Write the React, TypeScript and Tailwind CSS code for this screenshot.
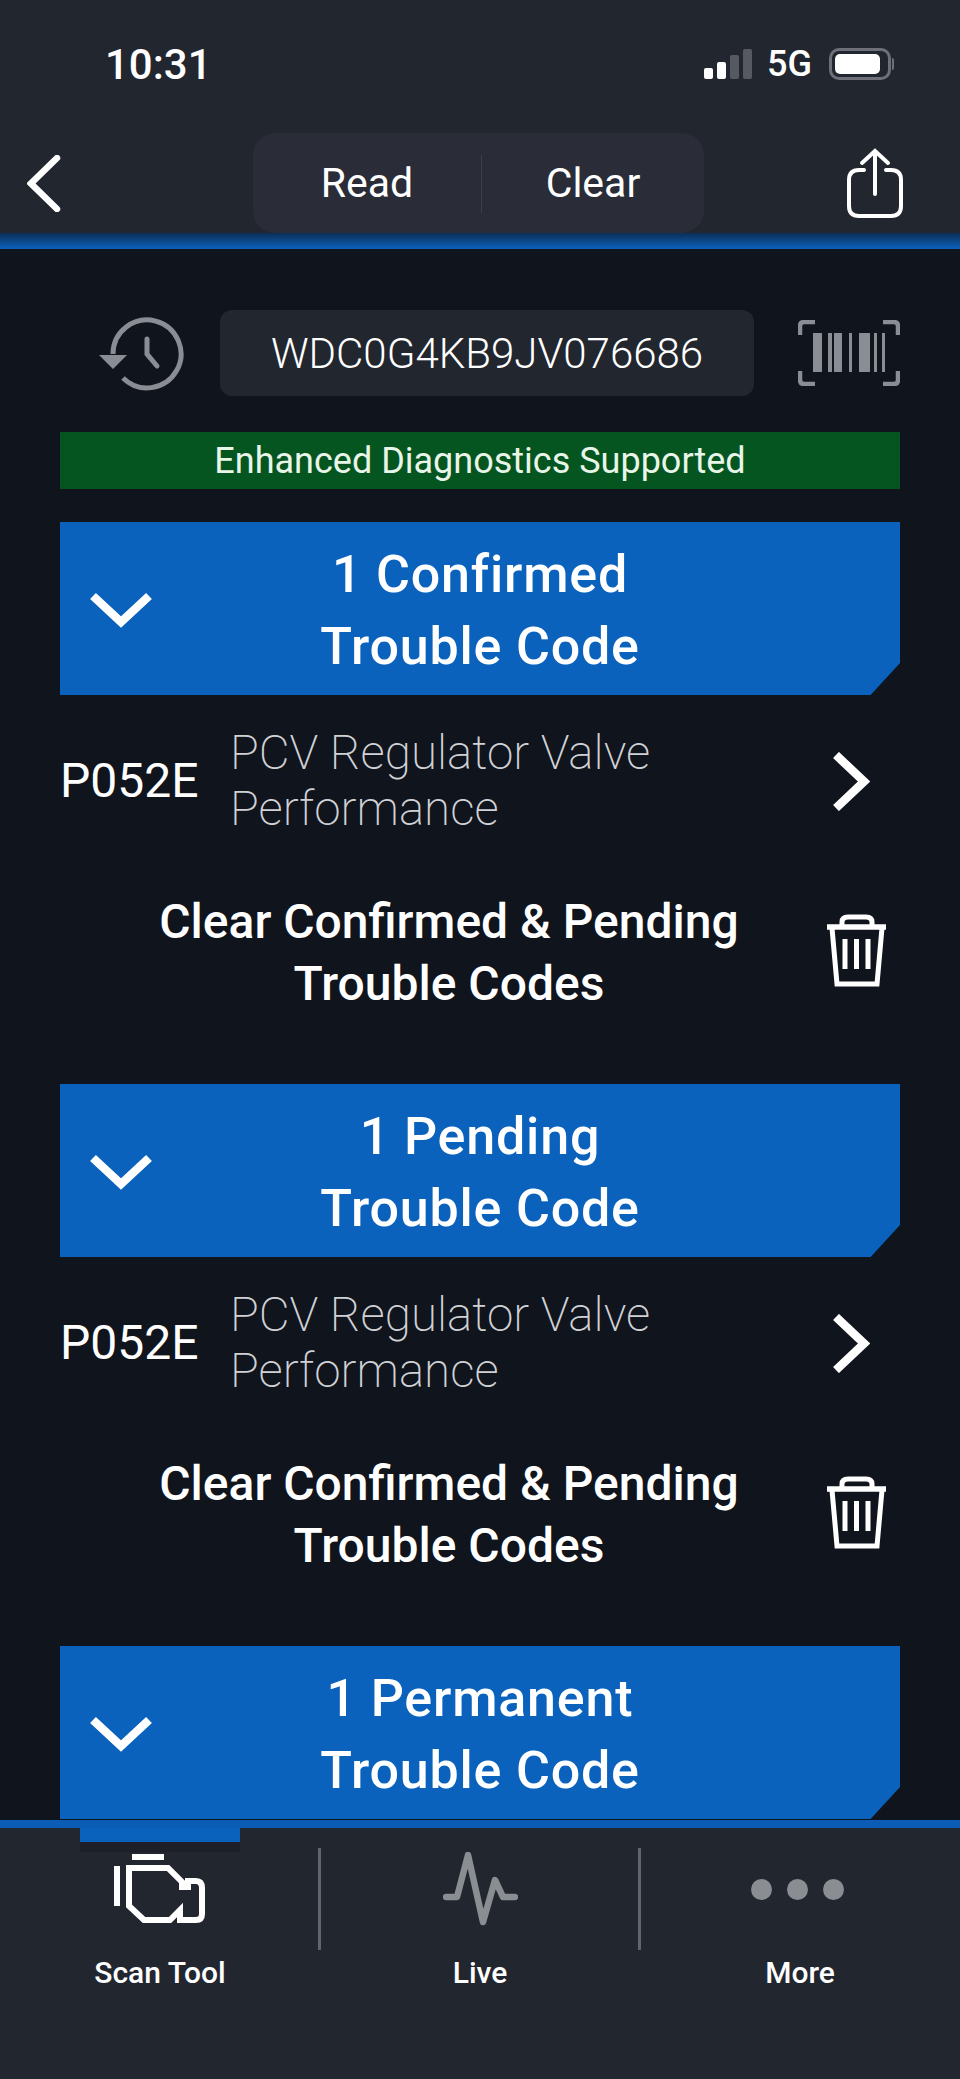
import React from 'react'

const font = "font-['Roboto',sans-serif]"

const ChevronDown = () => (
  <svg width="62" height="36" viewBox="0 0 62 36" fill="none" stroke="white" strokeWidth="8.5">
    <path d="M3 4 L31 30 L59 4" />
  </svg>
)

const ChevronRight = () => (
  <svg width="38" height="59" viewBox="0 0 38 59" fill="none" stroke="white" strokeWidth="8.5">
    <path d="M4 3 L32 29.5 L4 56" />
  </svg>
)

const Trash = () => (
  <svg width="64" height="75" viewBox="0 0 64 75" fill="none" stroke="white" strokeWidth="5">
    <path d="M2 13 H61" strokeWidth="5.5" />
    <path d="M17 12 V8 Q17 3 23 3 H41 Q47 3 47 8 V12" />
    <path d="M7 14 L12 70 H52 L57 14" />
    <path d="M20 25 V55 M31.5 25 V55 M43 25 V55" />
  </svg>
)

const SectionHeader = ({ line1 }: { line1: string }) => (
  <div className="relative flex h-[173px] shrink-0 items-center justify-center bg-[#0a62bd] [clip-path:polygon(0_0,100%_0,100%_81.5%,96.5%_100%,0_100%)]">
    <div className="absolute left-[30px] top-[70px]">
      <ChevronDown />
    </div>
    <div className="pt-[4px] text-center text-[52px] font-medium leading-[72px] tracking-[0.8px] text-white">
      {line1}
      <br />
      Trouble Code
    </div>
  </div>
)

const CodeSection = ({ title }: { title: string }) => (
  <section className="mb-[69px] flex flex-col">
    <SectionHeader line1={title} />
    <div className="mt-[30px] flex h-[112px] items-center">
      <div className="w-[170px] text-[48px] text-white">P052E</div>
      <div className="flex-1 text-[47.5px] font-extralight leading-[56px] text-[#cfd1d5]">
        PCV Regulator Valve
        <br />
        Performance
      </div>
      <div className="mr-[30px]">
        <ChevronRight />
      </div>
    </div>
    <div className="mt-[54px] flex h-[124px] items-center">
      <div className="ml-[14px] w-[750px] text-center text-[48px] font-medium leading-[62px] text-white">
        Clear Confirmed &amp; Pending
        <br />
        Trouble Codes
      </div>
      <div className="ml-[1px] mt-[-4px]">
        <Trash />
      </div>
    </div>
  </section>
)

const TabItem = ({ label, children }: { label: string; children: React.ReactNode }) => (
  <div className="flex w-[320px] flex-col items-center">
    <div className="flex h-[100px] items-center pb-[18px]">{children}</div>
    <div className="mt-[8px] text-[30px] font-medium leading-[34px] text-white">{label}</div>
  </div>
)

export default function App() {
  return (
    <div className={`flex h-[2079px] w-[960px] flex-col overflow-hidden bg-[#10141d] ${font}`}>
      <header className="shrink-0 bg-[#22262f]">
        <div className="flex h-[128px] items-center pl-[105px] pr-[66px]">
          <span className="text-[42px] font-medium text-white">10:31</span>
          <div className="ml-auto flex items-center">
            <div className="flex h-[30px] items-end gap-[4px]">
              <span className="h-[11px] w-[9px] rounded-[2px] bg-white" />
              <span className="h-[17px] w-[9px] rounded-[2px] bg-white" />
              <span className="h-[24px] w-[9px] rounded-[2px] bg-[#565962]" />
              <span className="h-[30px] w-[9px] rounded-[2px] bg-[#565962]" />
            </div>
            <span className="ml-[15px] text-[36px] font-medium leading-none text-white">5G</span>
            <div className="ml-[17px] flex items-center">
              <div className="flex h-[32px] w-[62px] items-center rounded-[10px] border-[3px] border-[#6d7079] p-[3px]">
                <div className="h-[20px] w-[45px] rounded-[5px] bg-white" />
              </div>
              <div className="ml-[1px] h-[12px] w-[2px] rounded-r bg-[#6d7079]" />
            </div>
          </div>
        </div>
        <div className="mt-[5px] flex h-[100px] items-center pl-[27px] pr-[57px]">
          <svg width="34" height="57" viewBox="0 0 34 57" fill="none" stroke="white" strokeWidth="6.5" strokeLinecap="round">
            <path d="M30 3 L4 28.5 L30 54" />
          </svg>
          <div className="ml-[192px] flex h-[100px] w-[451px] items-center rounded-[22px] bg-[#2a2d37] pt-[2px] text-[41px] text-white">
            <span className="w-[228px] text-center">Read</span>
            <span className="h-[58px] w-px bg-[#3d404a]" />
            <span className="flex-1 text-center">Clear</span>
          </div>
          <svg className="ml-auto" width="56" height="70" viewBox="0 0 56 70" fill="none" stroke="white" strokeWidth="4" strokeLinecap="round">
            <path d="M28 46 V3 M15 15 L28 3 L41 15" />
            <path d="M17 22 H12 Q2 22 2 32 V58 Q2 68 12 68 H44 Q54 68 54 58 V32 Q54 22 44 22 H39" />
          </svg>
        </div>
      </header>
      <div className="h-[16px] shrink-0 bg-gradient-to-b from-[#0a2f57] to-[#0a62bd]" />

      <main className="min-h-0 flex-1 overflow-hidden px-[60px] pt-[61px]">
        <div className="flex h-[86px] items-center pl-[39px]">
          <svg className="mt-[2px]" width="85" height="74" viewBox="0 0 85 74" fill="none" stroke="#8b8d94" strokeWidth="5">
            <path d="M14 37 A34 34 0 1 1 24 61" />
            <path d="M0 38 H28 L14 52 Z" fill="#8b8d94" stroke="none" />
            <path d="M48 22 V37 L58 49" strokeLinecap="round" />
          </svg>
          <div className="ml-[36px] flex h-[86px] w-[534px] items-center justify-center rounded-[12px] bg-[#22262f] text-[42px] font-light text-white">
            WDC0G4KB9JV076686
          </div>
          <svg className="ml-auto" width="102" height="66" viewBox="0 0 102 66" fill="none" stroke="#8b8d94" strokeWidth="4.5">
            <path d="M2 15 V6 Q2 2 6 2 H17 M100 15 V6 Q100 2 96 2 H85 M2 51 V60 Q2 64 6 64 H17 M100 51 V60 Q100 64 96 64 H85" />
            <path d="M15 13 H24 V52 H15 Z M30 13 H34 V52 H30 Z M36 13 H44 V52 H36 Z M51 13 H54 V52 H51 Z M61 13 H72 V52 H61 Z M76 13 H79 V52 H76 Z M84 13 H87 V52 H84 Z" fill="#8b8d94" stroke="none" />
          </svg>
        </div>
        <div className="mb-[33px] mt-[36px] flex h-[57px] items-center justify-center bg-[#055520] text-[36px] text-[#e8f5e8]">
          Enhanced Diagnostics Supported
        </div>
        <CodeSection title="1 Confirmed" />
        <CodeSection title="1 Pending" />
        <SectionHeader line1="1 Permanent" />
      </main>

      <footer className="relative h-[259px] shrink-0 bg-[#22262f]">
        <div className="h-[8px] bg-[#0a5cb4]" />
        <div className="absolute left-[80px] top-[8px] h-[14px] w-[160px] bg-[#0a62bd]" />
        <div className="absolute left-[80px] top-[22px] h-[10px] w-[160px] bg-[#1d2028]" />
        <div className="flex pt-[20px]">
          <TabItem label="Scan Tool">
            <svg width="92" height="70" viewBox="0 0 92 70" fill="none" stroke="white" strokeWidth="6">
              <path d="M18 3 H50" />
              <path d="M3 12 V52" />
              <path d="M15 14 H54 L68 28 V33 H74 V27 H82 Q88 27 88 34 V60 Q88 66 82 66 H66 V56 L56 66 H30 L15 52 Z" />
            </svg>
          </TabItem>
          <div className="ml-[-2px] mr-[-1px] h-[102px] w-[3px] shrink-0 bg-[#62656c]" />
          <TabItem label="Live">
            <svg width="75" height="74" viewBox="0 0 75 74" fill="none" stroke="#8a8d92" strokeWidth="6.5" strokeLinecap="round" strokeLinejoin="round">
              <path d="M3 45 H14 L25 3 L40 70 L52 28 L60 45 H72" />
            </svg>
          </TabItem>
          <div className="ml-[-2px] mr-[-1px] h-[102px] w-[3px] shrink-0 bg-[#62656c]" />
          <TabItem label="More">
            <div className="mr-[6px] flex gap-[15px]">
              <span className="size-[21px] rounded-full bg-[#8a8d92]" />
              <span className="size-[21px] rounded-full bg-[#8a8d92]" />
              <span className="size-[21px] rounded-full bg-[#8a8d92]" />
            </div>
          </TabItem>
        </div>
      </footer>
    </div>
  )
}
